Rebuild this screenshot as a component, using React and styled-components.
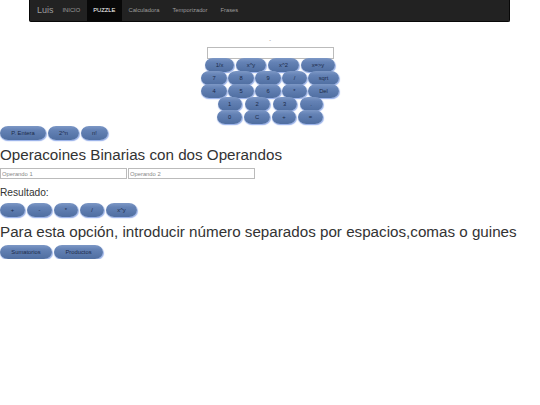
import styled, { createGlobalStyle } from "styled-components";

const GlobalStyle = createGlobalStyle`
  body {
    margin: 0;
    background: #fff;
    font-family: "Liberation Sans", Arial, sans-serif;
    color: #333;
  }
`;

const Navbar = styled.nav`
  width: 481px;
  height: 22px;
  margin: 0 0 0 29px;
  padding-left: 7px;
  box-sizing: border-box;
  display: flex;
  align-items: stretch;
  background: #222;
  border: 1px solid #080808;
  border-top: 0;
  border-radius: 0 0 2px 2px;
`;

const Brand = styled.span`
  font-size: 9px;
  color: #9d9d9d;
  line-height: 21px;
  margin-right: 4px;
  width: 15px;
`;

const NavItem = styled.a`
  font-size: 5.8px;
  line-height: 21px;
  padding: 0 6.5px;
  color: ${(p) => (p.$active ? "#fff" : "#9d9d9d")};
  background: ${(p) => (p.$active ? "#080808" : "transparent")};
`;

const Calculator = styled.div`
  margin-top: 14px;
  display: flex;
  flex-direction: column;
  align-items: center;
`;

const Dash = styled.div`
  height: 11px;
  font-size: 5px;
  line-height: 8px;
  color: #777;
`;

const Display = styled.input`
  width: 127px;
  height: 12px;
  box-sizing: border-box;
  margin: 0 0 -1px;
  padding: 0;
  border: 1px solid #bbb;
  background: #fff;
`;

const KeyRow = styled.div`
  display: flex;
  gap: ${(p) => p.$gap}px;
  height: 13px;
`;

const Btn = styled.button`
  width: ${(p) => p.$w}px;
  height: 14px;
  margin: 0;
  padding: 0;
  flex: none;
  border: 0;
  border-radius: 8px / 7px;
  font-family: inherit;
  font-size: 5.8px;
  line-height: 13px;
  color: #1c2a48;
  background: linear-gradient(#7d98c6 0%, #6482b5 30%, #4f6ea1 100%);
  box-shadow: 0 1px 1px #9db4ea, 1px 1px 1px #9db4ea;
`;

const ButtonRow = styled.div`
  display: flex;
  gap: 2px;
  height: 14px;
  margin-top: ${(p) => p.$top || 0}px;
`;

const Heading = styled.h2`
  margin: 6px 0 0;
  font-size: 15.2px;
  font-weight: 400;
  line-height: 18px;
`;

const Operands = styled.div`
  display: flex;
  gap: 1px;
  margin-top: 4px;
`;

const Operand = styled.input`
  width: 127px;
  height: 11px;
  box-sizing: border-box;
  margin: 0;
  padding: 0 1px;
  border: 1px solid #bbb;
  font-family: inherit;
  font-size: 5.8px;
  &::placeholder {
    color: #888;
  }
`;

const Result = styled.p`
  margin: 7px 0 4px;
  font-size: 10.2px;
  line-height: 13px;
`;

const rows = [
  { gap: 2, keys: [["1/x", 29], ["x^y", 30], ["x^2", 31], ["x=>y", 34]] },
  { gap: 1, keys: [["7", 26], ["8", 26], ["9", 26], ["/", 25], ["sqrt", 31]] },
  { gap: 1, keys: [["4", 26], ["5", 26], ["6", 26], ["*", 25], ["Del", 31]] },
  { gap: 3, keys: [["1", 24], ["2", 25], ["3", 24], [".", 23]] },
  { gap: 2, keys: [["0", 25], ["C", 26], ["+", 24], ["=", 25]] },
];

const App = () => {
  return (
    <>
      <GlobalStyle />
      <Navbar>
        <Brand>Luis</Brand>
        <NavItem>INICIO</NavItem>
        <NavItem $active>PUZZLE</NavItem>
        <NavItem>Calculadora</NavItem>
        <NavItem>Temporizador</NavItem>
        <NavItem>Frases</NavItem>
      </Navbar>
      <Calculator>
        <Dash>-</Dash>
        <Display />
        {rows.map((row, i) => (
          <KeyRow key={i} $gap={row.gap}>
            {row.keys.map(([label, w]) => (
              <Btn key={label} $w={w}>{label}</Btn>
            ))}
          </KeyRow>
        ))}
      </Calculator>
      <ButtonRow $top={3}>
        <Btn $w={46}>P. Entera</Btn>
        <Btn $w={31}>2^n</Btn>
        <Btn $w={27}>n!</Btn>
      </ButtonRow>
      <Heading>Operacoines Binarias con dos Operandos</Heading>
      <Operands>
        <Operand placeholder="Operando 1" />
        <Operand placeholder="Operando 2" />
      </Operands>
      <Result>Resultado:</Result>
      <ButtonRow>
        <Btn $w={25}>+</Btn>
        <Btn $w={25}>-</Btn>
        <Btn $w={24}>*</Btn>
        <Btn $w={24}>/</Btn>
        <Btn $w={31}>x^y</Btn>
      </ButtonRow>
      <Heading>Para esta opción, introducir número separados por espacios,comas o guines</Heading>
      <ButtonRow $top={4}>
        <Btn $w={52}>Sumatorios</Btn>
        <Btn $w={49}>Productos</Btn>
      </ButtonRow>
    </>
  );
};

export default App;
